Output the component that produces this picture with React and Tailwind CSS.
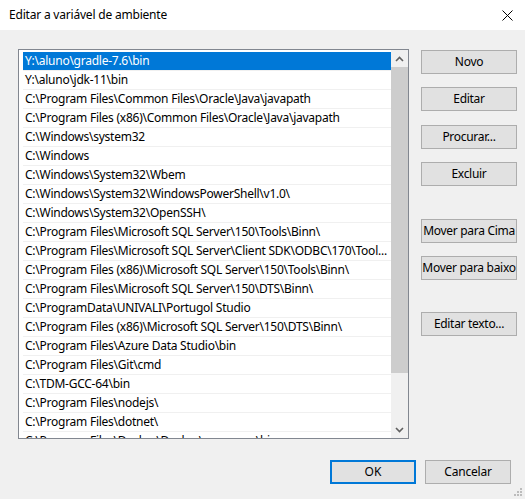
import React from "react";

const paths = [
  "Y:\\aluno\\gradle-7.6\\bin",
  "Y:\\aluno\\jdk-11\\bin",
  "C:\\Program Files\\Common Files\\Oracle\\Java\\javapath",
  "C:\\Program Files (x86)\\Common Files\\Oracle\\Java\\javapath",
  "C:\\Windows\\system32",
  "C:\\Windows",
  "C:\\Windows\\System32\\Wbem",
  "C:\\Windows\\System32\\WindowsPowerShell\\v1.0\\",
  "C:\\Windows\\System32\\OpenSSH\\",
  "C:\\Program Files\\Microsoft SQL Server\\150\\Tools\\Binn\\",
  "C:\\Program Files\\Microsoft SQL Server\\Client SDK\\ODBC\\170\\Tool...",
  "C:\\Program Files (x86)\\Microsoft SQL Server\\150\\Tools\\Binn\\",
  "C:\\Program Files\\Microsoft SQL Server\\150\\DTS\\Binn\\",
  "C:\\ProgramData\\UNIVALI\\Portugol Studio",
  "C:\\Program Files (x86)\\Microsoft SQL Server\\150\\DTS\\Binn\\",
  "C:\\Program Files\\Azure Data Studio\\bin",
  "C:\\Program Files\\Git\\cmd",
  "C:\\TDM-GCC-64\\bin",
  "C:\\Program Files\\nodejs\\",
  "C:\\Program Files\\dotnet\\",
  "C:\\Program Files\\Docker\\Docker\\resources\\bin",
];

const font = { fontFamily: '"Segoe UI", "Noto Sans", "Liberation Sans", sans-serif' };

function Btn({ children, className = "" }) {
  return (
    <button
      className={
        "h-[24px] w-[96px] border border-[#adadad] bg-[#e1e1e1] text-[12px] tracking-[-0.3px] leading-none text-black whitespace-nowrap flex items-center justify-center " +
        className
      }
    >
      {children}
    </button>
  );
}

function Chevron({ up }) {
  return (
    <svg width="9" height="6" viewBox="0 0 9 6">
      <path
        d={up ? "M1 5 L4.5 1.5 L8 5" : "M1 1 L4.5 4.5 L8 1"}
        fill="none"
        stroke="#606060"
        strokeWidth="1.6"
      />
    </svg>
  );
}

export default function App() {
  return (
    <div className="w-[525px] h-[499px] flex flex-col bg-[#f0f0f0] overflow-hidden" style={font}>
      {/* title bar */}
      <div className="h-[30px] bg-white flex items-center justify-between pl-[9px] pr-[12px] shrink-0">
        <span className="text-[12px] tracking-[-0.2px] text-black">Editar a variável de ambiente</span>
        <svg width="11" height="11" viewBox="0 0 11 11">
          <path d="M0.5 0.5 L10.5 10.5 M10.5 0.5 L0.5 10.5" stroke="#000" strokeWidth="1" />
        </svg>
      </div>

      <div className="flex-1 relative flex flex-col">
        <div className="flex pt-[19px] pl-[18px]">
          {/* path list */}
          <div className="w-[391px] h-[390px] border border-[#828790] bg-white flex overflow-hidden">
            <div className="flex-1 pl-[4px] pt-[2px] overflow-hidden">
              {paths.map((p, i) => (
                <div
                  key={i}
                  className={
                    "h-[19px] border-b border-[#f0f0f0] pl-[2px] text-[12px] tracking-[-0.25px] leading-[18px] whitespace-nowrap overflow-hidden " +
                    (i === 0 ? "bg-[#0078d7] text-white" : "text-black")
                  }
                >
                  {p}
                </div>
              ))}
            </div>
            {/* vertical scrollbar */}
            <div className="w-[17px] bg-[#f0f0f0] flex flex-col">
              <div className="h-[17px] flex items-center justify-center">
                <Chevron up />
              </div>
              <div className="flex-1 flex flex-col">
                <div className="h-[306px] bg-[#cdcdcd]" />
              </div>
              <div className="h-[17px] flex items-center justify-center">
                <Chevron />
              </div>
            </div>
          </div>

          {/* action buttons */}
          <div className="ml-[12px] pt-[1px] flex flex-col">
            <Btn>Novo</Btn>
            <Btn className="mt-[13px]">Editar</Btn>
            <Btn className="mt-[14px]">Procurar...</Btn>
            <Btn className="mt-[13px]">Excluir</Btn>
            <Btn className="mt-[33px]">Mover para Cima</Btn>
            <Btn className="mt-[13px]">Mover para baixo</Btn>
            <Btn className="mt-[32px]">Editar texto...</Btn>
          </div>
        </div>

        {/* dialog buttons */}
        <div className="flex justify-end gap-[9px] pr-[14px] mt-[21px]">
          <button className="h-[24px] w-[86px] border-2 border-[#0078d7] bg-[#e1e1e1] text-[12px] text-black">
            OK
          </button>
          <button className="h-[24px] w-[86px] border border-[#adadad] bg-[#e1e1e1] text-[12px] tracking-[-0.2px] text-black">
            Cancelar
          </button>
        </div>

        {/* size grip */}
        <svg className="absolute right-[3px] bottom-[3px]" width="8" height="8" viewBox="0 0 8 8">
          <rect x="6" y="0" width="2" height="2" fill="#bcbcbc" />
          <rect x="3" y="3" width="2" height="2" fill="#bcbcbc" />
          <rect x="6" y="3" width="2" height="2" fill="#bcbcbc" />
          <rect x="0" y="6" width="2" height="2" fill="#bcbcbc" />
          <rect x="3" y="6" width="2" height="2" fill="#bcbcbc" />
          <rect x="6" y="6" width="2" height="2" fill="#bcbcbc" />
        </svg>
      </div>
    </div>
  );
}
